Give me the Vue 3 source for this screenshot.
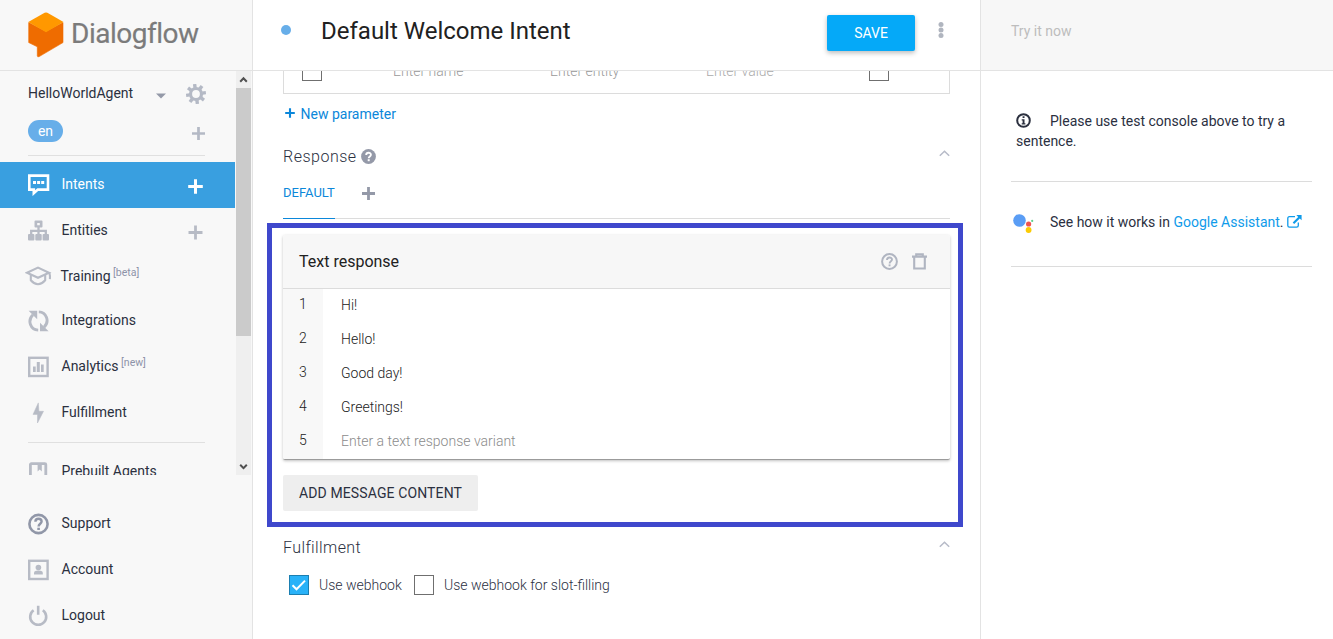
<script setup>
const responses = ['Hi!', 'Hello!', 'Good day!', 'Greetings!']
</script>

<template>
  <div class="app">
    <aside class="side">
      <div class="brand">
        <svg class="cube" width="36" height="46" viewBox="0 0 36 46">
          <path d="M0.7 10.6 18 19.6 35 10.6V30.6L11.2 44.6Q9.4 45.4 9.3 43.8V34.8L0.7 30.6Z" fill="#ef6c00" stroke="#ef6c00" stroke-width=".6" stroke-linejoin="round" />
          <path d="M0.3 10 16.6.8Q18 .2 19.4.8L35.5 10 18 20.3Z" fill="#ff9800" />
        </svg>
        <span class="wordmark">Dialogflow</span>
      </div>
      <div class="navwrap">
        <div class="nav">
          <div class="agent">
            <span class="agentname">HelloWorldAgent</span>
            <svg class="caret" width="10" height="6" viewBox="0 0 10 6"><path d="M0 .4h10L5 5.6z" fill="#9499a8" /></svg>
            <svg class="gear" width="20" height="20" viewBox="0 0 20 20">
              <g stroke="#b4b9c5" fill="none">
                <circle cx="10" cy="10" r="5.5" stroke-width="3.2" />
                <g stroke-width="3.4">
                  <path v-for="a in 8" :key="a" d="M10 0v3.600" :transform="`rotate(${a * 45 - 8} 10 10)`" />
                </g>
              </g>
            </svg>
          </div>
          <div class="lang">
            <span class="pill">en</span>
            <svg class="plus13" width="13" height="13" viewBox="0 0 13 13"><path d="M6.5 0v13M0 6.5h13" stroke="#b4b9c5" stroke-width="2.7" /></svg>
          </div>
          <div class="rule"></div>
          <div class="item active">
            <svg width="22" height="22" viewBox="0 0 22 22"><path d="M1.3 1.6H20v14H9.8L5.8 19.2V15.6H1.3z" fill="none" stroke="#fff" stroke-width="2.6" /><path d="M5 7h3v3H5zM9.1 7h3v3h-3zM13.2 7h3v3h-3z" fill="#fff" /></svg>
            <span class="label">Intents</span>
            <svg class="add" width="15" height="15" viewBox="0 0 15 15"><path d="M7.5 .2v14.6M.2 7.5h14.6" stroke="#fff" stroke-width="3" /></svg>
          </div>
          <div class="item">
            <svg width="22" height="22" viewBox="0 0 22 22"><g fill="#b7bbc5"><path fill-rule="evenodd" d="M7.5.6h6a1 1 0 0 1 1 1v5a1 1 0 0 1-1 1h-6a1 1 0 0 1-1-1v-5a1 1 0 0 1 1-1zM9.2 3v2.3h2.6V3z" /><rect y="14" width="6.4" height="6.6" rx="1" /><rect x="7.3" y="14" width="6.4" height="6.6" rx="1" /><rect x="14.6" y="14" width="6.4" height="6.6" rx="1" /></g><path d="M10.5 7v8M3.2 15v-4.2h14.6V15" fill="none" stroke="#b7bbc5" stroke-width="2.3" /></svg>
            <span class="label">Entities</span>
            <svg class="add" width="15" height="15" viewBox="0 0 15 15"><path d="M7.5 .5v14M.5 7.5h14" stroke="#b7bbc5" stroke-width="2.8" /></svg>
          </div>
          <div class="item training">
            <svg width="27" height="20" viewBox="0 0 27 20"><g fill="none" stroke="#b7bbc5" stroke-width="2.100"><path d="M2 6.7 13 1.6l11 5.1-11 5.1z" /><path d="M5.8 8.8v5.4q7.2 8 14.4 0V8.8" /><path d="M24.3 6.5q1 3.4.6 6.7" /></g></svg>
            <span class="label">Training</span><span class="tag">[beta]</span>
          </div>
          <div class="item integ">
            <svg width="22" height="22" viewBox="0 0 22 22"><g fill="none" stroke="#b7bbc5" stroke-width="2.9"><path d="M10.2 20.1C2.5 19.8-1 10.6 5 4.8" /><path d="M10.8 1.9c7.7.3 11.2 9.5 5.2 15.3" /></g><path d="M.6.8h8.6v8.5zM20.6 21.2H12v-8.5z" fill="#b7bbc5" /></svg>
            <span class="label">Integrations</span>
          </div>
          <div class="item low">
            <svg width="22" height="22" viewBox="0 0 22 22"><rect x="1.2" y="1.8" width="18.4" height="18.2" fill="none" stroke="#b7bbc5" stroke-width="2.4" /><path d="M5 10.5h2.7V16H5zM8.800 6h3v10h-3zM13 8.600h2.700V16H13z" fill="#b7bbc5" /></svg>
            <span class="label">Analytics</span><span class="tag">[new]</span>
          </div>
          <div class="item low">
            <svg width="22" height="22" viewBox="0 0 22 22"><path d="M10.3.9 5 12.4h4.5V21L15.5 9.3h-4.6z" fill="#b7bbc5" stroke="#b7bbc5" stroke-width=".5" /></svg>
            <span class="label">Fulfillment</span>
          </div>
          <div class="rule second"></div>
          <div class="item low">
            <svg width="22" height="22" viewBox="0 0 22 22"><rect x="2.4" y="2.6" width="15.4" height="17" rx="1" fill="none" stroke="#b7bbc5" stroke-width="2.8" /><path d="M9.6 2.500h4.200v8l-2.100-2-2.100 2z" fill="#b7bbc5" /></svg>
            <span class="label">Prebuilt Agents</span>
          </div>
        </div>
        <div class="scroll">
          <svg width="15" height="17" viewBox="0 0 15 17"><path d="m4.2 10.7 3.3-3.4 3.3 3.4" fill="none" stroke="#505050" stroke-width="2" /></svg>
          <div class="thumb"></div>
          <svg width="15" height="17" viewBox="0 0 15 17"><path d="m4.2 6.7 3.3 3.4 3.3-3.4" fill="none" stroke="#505050" stroke-width="2" /></svg>
        </div>
      </div>
      <div class="bottom">
        <div class="item">
          <svg width="22" height="22" viewBox="0 0 22 22"><circle cx="10.5" cy="11" r="9.1" fill="none" stroke="#9197a8" stroke-width="2.6" /><path d="M7.4 8.8C7.4 4.7 13.6 5 13.6 8.5c0 2.2-3 2.300-3 5" fill="none" stroke="#9197a8" stroke-width="2.4" /><path d="M9.300 14.700h2.600v2.300H9.300z" fill="#9197a8" /></svg>
          <span class="label">Support</span>
        </div>
        <div class="item">
          <svg width="22" height="22" viewBox="0 0 22 22"><rect x="1.2" y="1.8" width="18.4" height="18.2" fill="none" stroke="#b7bbc5" stroke-width="2.4" /><circle cx="10.4" cy="8.6" r="2.8" fill="#b7bbc5" /><path d="M6 15.6v-1.8q0-1.5 2-2h4.8q2 .5 2 2v1.8z" fill="#b7bbc5" /></svg>
          <span class="label">Account</span>
        </div>
        <div class="item">
          <svg width="22" height="22" viewBox="0 0 22 22"><path d="M5.6 5.2a8 8 0 1 0 9.2 0M10.2.8v9" fill="none" stroke="#b7bbc5" stroke-width="2.6" /></svg>
          <span class="label">Logout</span>
        </div>
      </div>
    </aside>

    <main class="main">
      <header class="head">
        <i class="dot"></i>
        <h1>Default Welcome Intent</h1>
        <button class="save">SAVE</button>
        <svg class="more" width="6" height="18" viewBox="0 0 6 18"><g fill="#b0b5bf"><circle cx="3" cy="3.4" r="2.5" /><circle cx="3" cy="9" r="2.5" /><circle cx="3" cy="14.6" r="2.5" /></g></svg>
      </header>
      <div class="params">
        <div class="prow">
          <i class="box"></i><span class="p1">Enter name</span><span class="p2">Enter entity</span><span class="p3">Enter value</span><i class="box"></i>
        </div>
      </div>
      <div class="newp">
        <svg width="10" height="10" viewBox="0 0 10 10"><path d="M5 .2v9.6M.2 5h9.6" stroke="#0b87da" stroke-width="2.1" /></svg>
        <span>New parameter</span>
      </div>
      <div class="sec">
        <span>Response</span>
        <svg class="q" width="15" height="15" viewBox="0 0 15 15"><circle cx="7.5" cy="7.5" r="7.4" fill="#9499a8" /><path d="M5.2 6C5.2 3 9.9 3 9.9 5.7c0 1.8-2.2 1.7-2.2 3.5" fill="none" stroke="#fff" stroke-width="1.9" /><path d="M6.7 10.2h2v2h-2z" fill="#fff" /></svg>
        <svg class="chev" width="11" height="7" viewBox="0 0 11 7"><path d="M.8 5.8 5.5 1.2l4.7 4.6" fill="none" stroke="#b7bbc8" stroke-width="1.5" /></svg>
      </div>
      <div class="tabs">
        <span class="tab">DEFAULT</span>
        <svg width="13" height="13" viewBox="0 0 13 13"><path d="M6.5 0v13M0 6.5h13" stroke="#9499a8" stroke-width="2.8" /></svg>
      </div>
      <section class="frame">
        <div class="card">
          <div class="cardhead">
            <span>Text response</span>
            <svg class="help" width="17" height="17" viewBox="0 0 17 17"><circle cx="8.5" cy="8.5" r="7.4" fill="none" stroke="#b0b5c1" stroke-width="2" /><path d="M6 7C6 3.8 11 3.8 11 6.6c0 1.7-2.4 1.8-2.4 3.9" fill="none" stroke="#b0b5c1" stroke-width="1.9" /><path d="M7.6 11.4h1.9v1.9H7.6z" fill="#b0b5c1" /></svg>
            <svg width="15" height="17" viewBox="0 0 15 17"><path d="M2.2 4v11.5h10.6V4M0 3.6h15M4.2 3.4V1.3h6.6v2.1" fill="none" stroke="#b0b5c1" stroke-width="2.1" /></svg>
          </div>
          <div v-for="(r, i) in responses" :key="r" class="line"><span class="num">{{ i + 1 }}</span><span class="txt">{{ r }}</span></div>
          <div class="line"><span class="num">5</span><span class="txt ph">Enter a text response variant</span></div>
        </div>
        <button class="addmsg">ADD MESSAGE CONTENT</button>
      </section>
      <div class="sec ful">
        <span>Fulfillment</span>
        <svg class="chev" width="11" height="7" viewBox="0 0 11 7"><path d="M.8 5.8 5.5 1.2l4.7 4.6" fill="none" stroke="#b7bbc8" stroke-width="1.5" /></svg>
      </div>
      <div class="checks">
        <i class="box on"><svg width="18" height="18" viewBox="0 0 18 18"><path d="m2.5 9.3 4 4L15 4.6" fill="none" stroke="#fff" stroke-width="2" /></svg></i>
        <span class="c1">Use webhook</span>
        <i class="box"></i>
        <span>Use webhook for slot-filling</span>
      </div>
    </main>

    <aside class="try">
      <div class="tryhead">Try it now</div>
      <div class="note">
        <svg width="15" height="15" viewBox="0 0 15 15"><circle cx="7.5" cy="7.5" r="6.3" fill="none" stroke="#2b303f" stroke-width="2" /><path d="M6.6 3.2h1.9v1.9H6.6zM5.7 6.2h2.8v4h.9v1.3H5.7v-1.3h.9V7.5h-.9z" fill="#2b303f" /></svg>Please use test console above to try a sentence.
      </div>
      <div class="assist">
        <svg class="ga" width="22" height="22" viewBox="0 0 22 22"><circle cx="6.5" cy="7.5" r="6.3" fill="#5a9df5" /><circle cx="15.6" cy="11" r="2.6" fill="#ef5350" /><circle cx="15.6" cy="17" r="2.9" fill="#fbcb05" /><circle cx="19.2" cy="7.9" r="1.1" fill="#5ed08b" /></svg>
        <span>See how it works in <a>Google Assistant</a>.</span>
        <svg class="ext" width="15" height="13" viewBox="0 0 15 13"><path d="M8 1.7H2.4Q.8 1.7.8 3.3v7.2q0 1.7 1.6 1.7h7.2q1.7 0 1.7-1.7V7.4" fill="none" stroke="#0f9bea" stroke-width="1.3" /><path d="M9.3 0H14.6v5.3L12.8 3.6 7.2 9.1 5.7 7.6 11.2 2z" fill="#0f9bea" /></svg>
      </div>
    </aside>
  </div>
</template>

<style>
body { margin: 0; overflow: hidden; }
</style>

<style scoped>
.app { display: flex; width: 1333px; height: 639px; overflow: hidden; background: #fff; font-family: Roboto, "Liberation Sans", sans-serif; font-size: 14px; color: #2b303f; }
.app * { box-sizing: border-box; }
svg { display: block; flex: none; }
i, .app button { flex: none; }
button { border: 0; padding: 0; font: inherit; }

.side { width: 253px; height: 639px; background: #f8f8f8; border-right: 1px solid #e3e3e3; flex: none; }
.brand { height: 71px; border-bottom: 1px solid #e3e3e3; display: flex; align-items: flex-start; padding: 12px 0 0 28px; }
.wordmark { font-size: 28px; line-height: 32px; color: #7b7b7b; margin: 6px 0 0 7px; letter-spacing: -0.5px; -webkit-text-stroke: .2px #7b7b7b; }
.navwrap { display: flex; height: 404px; overflow: hidden; }
.nav { width: 236px; }
.agent { height: 45px; padding: 0 30px 0 28px; display: flex; align-items: center; }
.agentname { width: 128px; margin-top: -2px; }
.caret { margin-top: 4px; }
.gear { margin: 0 0 0 19.500px; }
.lang { height: 39px; padding: 0 31px 0 28px; display: flex; align-items: flex-start; justify-content: space-between; }
.pill { width: 35px; height: 22px; border-radius: 11px; background: #67aee9; color: #fff; text-align: center; line-height: 22px; margin-top: 4px; }
.plus13 { margin-top: 11px; }
.rule { height: 1px; background: #e0e0e0; margin: 0 31px 6px 28px; }
.rule.second { margin: 7px 31px 5px 28px; }
.item { height: 46px; display: flex; align-items: center; padding-left: 28px; }
.item > svg:first-child { margin-top: -1px; }
.label { margin: -2px 0 0 11.5px; white-space: nowrap; }
.low .label { margin-top: 0; }
.item.low > svg:first-child { margin-top: 1px; }
.active { background: #399fe0; color: #fff; width: 235px; }
.active .add { margin-right: 32px; }
.add { margin: 3px 33px 0 auto; }
.training { height: 45px; padding-left: 25px; }
.training .label { margin: -2px 0 0 8.5px; }
.item.training > svg:first-child { margin-top: -1px; }
.integ { height: 44px; }
.tag { font-size: 10.5px; color: #8d93a8; margin: -8px 0 0 2.5px; }
.scroll { width: 15px; background: #efefef; display: flex; flex-direction: column; }
.thumb { height: 248px; margin-bottom: auto; background: #cbcbcb; }
.bottom { padding-top: 26px; }

.main { width: 727px; flex: none; }
.head { height: 71px; border-bottom: 1px solid #e3e3e3; display: flex; align-items: flex-start; }
.dot { width: 10px; height: 10px; border-radius: 50%; background: #67aee9; margin: 25px 0 0 28px; }
h1 { margin: 15px 0 0 30px; width: 506px; font-weight: 400; font-size: 24px; line-height: 32px; color: #212121; }
.save { width: 88px; height: 36px; margin-top: 15px; background: #05a9f8; color: #fff; border-radius: 2px; box-shadow: 0 2px 5px rgba(0,0,0,.27); line-height: 36px; }
.more { margin: 21px 0 0 23px; }
.params { margin: 0 30px; height: 23px; border: 1px solid #dcdcdc; border-top: 0; overflow: hidden; display: flex; align-items: flex-end; }
.prow { display: flex; align-items: center; height: 44px; padding-left: 18px; flex: none; color: #999; font-weight: 300; }
.box { display: block; width: 20px; height: 20px; border: 1px solid #6f6f6f; background: #fff; }
.p1 { width: 157px; margin-left: 71px; }
.p2 { width: 156px; }
.p3 { width: 163px; color: #aaa; }
.newp { height: 40px; display: flex; align-items: center; padding-left: 32px; gap: 5.5px; color: #0b87da; }
.newp svg { margin-top: -2px; }
.sec { height: 44px; display: flex; align-items: center; padding: 0 30px; font-size: 16px; font-weight: 300; letter-spacing: .5px; }
.q { margin-left: 4px; }
.chev { margin: -5px 0 0 auto; }
.tabs { height: 41px; margin: 0 30px; border-bottom: 1px solid #dcdcdc; display: flex; align-items: flex-start; }
.tab { height: 41px; width: 52px; line-height: 29px; font-size: 13px; color: #0b87da; border-bottom: 1px solid #0b87da; white-space: nowrap; }
.tabs svg { margin: 9px 0 0 27px; }
.frame { margin: 4px 17px 0 14px; height: 304px; border: 5px solid #3f48cc; padding: 7px 8px 0 11px; }
.card { height: 225px; border-radius: 2px; border-bottom: 1px solid #9b9b9b; box-shadow: 0 1px 3px rgba(0,0,0,.25); overflow: hidden; }
.cardhead { height: 54px; background: #f7f7f7; border-bottom: 1px solid #dcdcdc; display: flex; align-items: center; padding: 0 23px 0 16px; font-size: 16px; color: #212121; }
.cardhead .help { margin: 0 14px 0 auto; }
.line { height: 34px; display: flex; }
.num { width: 40px; background: #f8f8f8; padding-left: 16px; line-height: 31px; height: 34px; font-weight: 300; color: #212121; }
.txt { padding-left: 18px; line-height: 33px; font-weight: 300; color: #212121; }
.ph { color: #8b8b8b; }
.addmsg { display: block; margin-top: 15px; width: 195px; height: 36px; border-radius: 2px; background: #eee; color: #2b303f; letter-spacing: .12px; }
.sec.ful { height: 40px; letter-spacing: .4px; }
.checks { height: 36px; display: flex; align-items: center; padding-left: 36px; gap: 10px; font-weight: 300; }
.on { background: #29b2f8; border-color: #1b7fb1; }
.c1 { width: 85px; }

.try { width: 353px; border-left: 1px solid #e3e3e3; flex: none; }
.tryhead { height: 71px; background: #f7f7f7; border-bottom: 1px solid #e3e3e3; padding: 22px 30px; line-height: 18px; color: #bdbdbd; }
.note { margin: 0 21px 0 30px; height: 111px; padding: 40px 10px 0 5px; line-height: 20px; border-bottom: 1px solid #dcdcdc; }
.note svg { display: inline-block; vertical-align: -2px; margin-right: 19px; }
.assist { margin: 0 21px 0 30px; height: 85px; border-bottom: 1px solid #dcdcdc; display: flex; align-items: center; padding-left: 2px; white-space: nowrap; }
.assist span { margin-left: 15px; margin-top: -4px; }
.ga { margin-top: -1px; }
.ext { margin: -6px 0 0 3px; }
a { color: #0f9bea; }
</style>
